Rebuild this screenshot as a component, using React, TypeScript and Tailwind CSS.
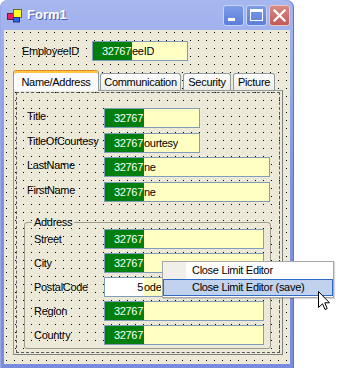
import React from 'react';

const clientDots = 'bg-[#ece9d8] bg-[radial-gradient(circle_at_2.5px_2.5px,#000_0.7px,transparent_0.8px)] bg-[length:8px_8px]';
const pageDots = 'bg-[#ece9d8] bg-[radial-gradient(circle_at_1.5px_1.5px,#000_0.7px,transparent_0.8px)] bg-[length:8px_8px]';

function TextBox({ className, rest = '', white = false, front = '32767' }: { className: string; rest?: string; white?: boolean; front?: string }) {
  return (
    <div className={`flex h-[20px] shrink-0 border border-[#7f9db9] bg-[#ffffc4] ${className}`}>
      <div className={`h-full w-[39px] pr-[1px] text-right leading-[18px] ${white ? 'bg-white text-black' : 'bg-[#007f0f] text-white'}`}>
        {front}
      </div>
      <span className="leading-[18px] whitespace-nowrap overflow-hidden">{rest}</span>
    </div>
  );
}

function TabRow({ label, box }: { label: string; box: React.ReactNode }) {
  return (
    <div className="flex items-center">
      <span className="mb-[4px] w-[87px] pl-[10px]">{label}</span>
      {box}
    </div>
  );
}

function AddrRow({ label, box }: { label: string; box: React.ReactNode }) {
  return (
    <div className="flex items-center">
      <span className="w-[79px] pl-[9px]">{label}</span>
      {box}
    </div>
  );
}

function TitleButton({ kind }: { kind: 'min' | 'max' | 'close' }) {
  const bg = kind === 'close'
    ? 'bg-gradient-to-b from-[#d98a84] to-[#c25a56] border-[#ecc3c0]'
    : 'bg-gradient-to-b from-[#7d9ce8] to-[#5a7edc] border-[#c9d4f4]';
  return (
    <div className={`h-[21px] w-[21px] rounded-[3px] border ${bg}`}>
      <svg width="19" height="19" viewBox="0 0 19 19">
        {kind === 'min' && <rect x="4" y="12" width="7" height="3" fill="#fff" />}
        {kind === 'max' && (
          <>
            <rect x="3.5" y="3.5" width="12" height="11" fill="none" stroke="#fff" strokeWidth="1" />
            <rect x="3" y="3" width="13" height="3" fill="#fff" />
          </>
        )}
        {kind === 'close' && (
          <path d="M4.5 4.5 L14.5 14.5 M14.5 4.5 L4.5 14.5" stroke="#fff" strokeWidth="2.2" strokeLinecap="square" />
        )}
      </svg>
    </div>
  );
}

export default function App() {
  return (
    <div className="relative h-[368px] w-[338px] overflow-hidden bg-white font-['Liberation_Sans',Arial,sans-serif] text-[11px] tracking-[-0.3px] text-black">
      {/* Window */}
      <div className="flex h-[368px] w-[294px] flex-col rounded-t-[8px] bg-gradient-to-b from-[#a7b7ef] via-[#8093e0] to-[#7a8ddc] shadow-[inset_1px_0_0_#9aa9ea,inset_-1px_0_0_#5f72c8]">
        {/* Title bar */}
        <div className="flex h-[30px] items-center pl-[6px] pr-[4px]">
          <svg width="16" height="16" viewBox="0 0 16 16">
            <rect x="1.5" y="6.5" width="6" height="6" fill="#e8206a" stroke="#5a2040" />
            <rect x="7.5" y="2.5" width="8" height="8" fill="#ffff20" stroke="#6a6a30" />
            <rect x="7.5" y="10.5" width="6" height="4.5" fill="#2f62e6" stroke="#1e3a90" />
          </svg>
          <span className="ml-[5px] font-bold text-[13px] tracking-normal text-white [text-shadow:1px_1px_0_#4a5cb0]">Form1</span>
          <div className="ml-auto flex gap-[2px]">
            <TitleButton kind="min" />
            <TitleButton kind="max" />
            <TitleButton kind="close" />
          </div>
        </div>

        {/* Client area */}
        <div className={`mx-[4px] mb-[4px] flex-1 ${clientDots}`}>
          <div className="flex items-center pt-[11px]">
            <span className="w-[88px] pl-[18px]">EmployeeID</span>
            <TextBox className="w-[96px]" rest="eeID" />
          </div>

          {/* Tab control */}
          <div className="ml-[9px] mt-[9px] w-[270px]">
            <div className="flex h-[20px] items-end">
              <div className="relative z-10 mb-[-1px] flex h-[21px] w-[86px] items-center justify-center rounded-t-[3px] border-x border-t border-[#919b9c] border-t-[#e68b2c] bg-[#fcfcfe] pt-[2px] shadow-[inset_0_2px_0_#ffc73c]">
                Name/Address
              </div>
              <div className="ml-[1px] flex h-[17px] w-[81px] items-center justify-center rounded-t-[3px] border-x border-t border-[#919b9c] bg-gradient-to-b from-white to-[#ecebe6]">
                Communication
              </div>
              <div className="ml-[2px] flex h-[17px] w-[48px] items-center justify-center rounded-t-[3px] border-x border-t border-[#919b9c] bg-gradient-to-b from-white to-[#ecebe6]">
                Security
              </div>
              <div className="ml-[2px] flex h-[17px] w-[42px] items-center justify-center rounded-t-[3px] border-x border-t border-[#919b9c] bg-gradient-to-b from-white to-[#ecebe6]">
                Picture
              </div>
            </div>

            {/* Tab page */}
            <div className={`h-[265px] border border-[#919b9c] border-r-[#7a8284] border-b-[#7a8284] ${pageDots}`}>
              <div className="mx-[2px] mt-[1px] h-[261px] border border-dashed border-[#5a5a5a]">
                <div className="flex flex-col gap-[4px] pt-[15px]">
                  <TabRow label="Title" box={<TextBox className="w-[96px]" />} />
                  <TabRow label="TitleOfCourtesy" box={<TextBox className="w-[96px]" rest="ourtesy" />} />
                  <TabRow label="LastName" box={<TextBox className="w-[166px]" rest="ne" />} />
                  <TabRow label="FirstName" box={<TextBox className="w-[166px]" rest="ne" />} />
                </div>

                <fieldset className="ml-[7px] mt-[14px] w-[247px] rounded-[3px] border border-solid border-[#9d9a8b] pb-[3px]">
                  <legend className="ml-[7px] px-[2px] leading-[12px]">Address</legend>
                  <div className="flex flex-col gap-[4px] pt-[1px]">
                    <AddrRow label="Street" box={<TextBox className="w-[160px]" />} />
                    <AddrRow label="City" box={<TextBox className="w-[160px]" />} />
                    <AddrRow label="PostalCode" box={<TextBox className="w-[160px]" white front="5" rest="ode" />} />
                    <AddrRow label="Region" box={<TextBox className="w-[160px]" />} />
                    <AddrRow label="Country" box={<TextBox className="w-[160px]" />} />
                  </div>
                </fieldset>
              </div>
            </div>
          </div>
        </div>
      </div>

      {/* Context menu */}
      <div className="absolute left-[162px] top-[261px] z-20 flex w-[172px] flex-col border border-[#a7a6aa] bg-white pb-[1px] shadow-[1px_1px_1px_rgba(0,0,0,0.15)]">
        <div className="flex h-[17px] items-center">
          <div className="h-full w-[23px] bg-[#f0efe8]" />
          <span className="pl-[6px]">Close Limit Editor</span>
        </div>
        <div className="flex h-[17px] items-center border border-[#316ac5] bg-[#c1d2ee]">
          <span className="pl-[28px]">Close Limit Editor (save)</span>
        </div>
      </div>

      {/* Mouse cursor */}
      <svg className="absolute left-[318px] top-[291px] z-30" width="12" height="20" viewBox="0 0 12 20">
        <path d="M0.5 0.5 L0.5 16.5 L4.5 12.8 L7 18.5 L9.2 17.6 L6.8 11.8 L11.5 11.8 Z" fill="#fff" stroke="#000" strokeWidth="1" />
      </svg>
    </div>
  );
}
